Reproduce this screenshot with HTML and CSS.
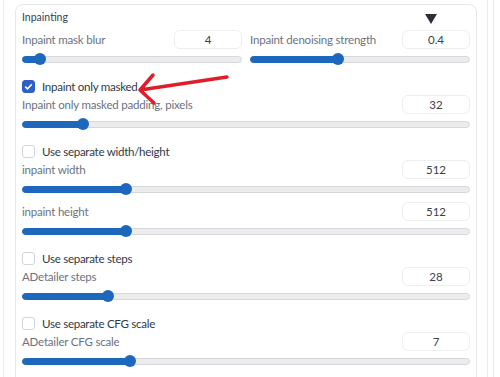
FILE: index.html
```html
<!doctype html>
<html lang="en">
<head>
  <meta charset="utf-8">
  <title>Inpainting</title>
  <link rel="stylesheet" href="styles.css">
</head>
<body>
<div class="page">
  <div class="frame">
    <div class="panel">
      <div class="panel-head">
        <span class="panel-title">Inpainting</span>
        <span class="caret"></span>
      </div>

      <div class="cols">
        <div class="field">
          <div class="field-head"><span class="label">Inpaint mask blur</span><span class="num">4</span></div>
          <div class="slider"><div class="track"><div class="fill" style="width:8%"></div><div class="thumb" style="left:8%"></div></div></div>
        </div>
        <div class="field">
          <div class="field-head"><span class="label">Inpaint denoising strength</span><span class="num">0.4</span></div>
          <div class="slider"><div class="track"><div class="fill" style="width:40%"></div><div class="thumb" style="left:40%"></div></div></div>
        </div>
      </div>

      <label class="check"><span class="box on"></span>Inpaint only masked</label>
      <div class="field">
        <div class="field-head"><span class="label">Inpaint only masked padding, pixels</span><span class="num">32</span></div>
        <div class="slider"><div class="track"><div class="fill" style="width:13.4%"></div><div class="thumb" style="left:13.4%"></div></div></div>
      </div>

      <label class="check"><span class="box"></span>Use separate width/height</label>
      <div class="field">
        <div class="field-head"><span class="label">inpaint width</span><span class="num">512</span></div>
        <div class="slider"><div class="track"><div class="fill" style="width:23%"></div><div class="thumb" style="left:23%"></div></div></div>
      </div>
      <div class="field">
        <div class="field-head"><span class="label">inpaint height</span><span class="num">512</span></div>
        <div class="slider"><div class="track"><div class="fill" style="width:23%"></div><div class="thumb" style="left:23%"></div></div></div>
      </div>

      <label class="check"><span class="box"></span>Use separate steps</label>
      <div class="field">
        <div class="field-head"><span class="label">ADetailer steps</span><span class="num">28</span></div>
        <div class="slider"><div class="track"><div class="fill" style="width:19%"></div><div class="thumb" style="left:19%"></div></div></div>
      </div>

      <label class="check"><span class="box"></span>Use separate CFG scale</label>
      <div class="field">
        <div class="field-head"><span class="label">ADetailer CFG scale</span><span class="num">7</span></div>
        <div class="slider"><div class="track"><div class="fill" style="width:24%"></div><div class="thumb" style="left:24%"></div></div></div>
      </div>

      <!-- red annotation arrow -->
      <svg class="arrow" width="105" height="44" viewBox="0 0 105 44">
        <path d="M97 15 L10 28 M23 13 L10 28 L24 41" fill="none" stroke="#e11d2a" stroke-width="3.5" stroke-linecap="round" stroke-linejoin="round"/>
      </svg>
    </div>
  </div>
  <div class="side"></div>
</div>
</body>
</html>
```

FILE: styles.css
```css
body {
  margin: 0;
  background: #fff;
  font-family: "Lato", "Noto Sans", sans-serif;
  color: #374151;
}

.page {
  display: flex;
  height: 377px;
  overflow: hidden;
}

.frame {
  margin-left: 3px;
  padding: 4px 10px 0 11px;
  border-left: 1px solid #ececec;
}

/* main block */
.panel {
  position: relative;
  display: flex;
  flex-direction: column;
  width: 448px;
  height: 400px;
  padding: 3px 6px 0 6px;
  border: 1px solid #e5e7eb;
  border-radius: 8px;
}

.panel-head {
  display: flex;
  align-items: center;
  justify-content: space-between;
  height: 18px;
  margin-bottom: 4px;
}
.panel-title {
  font-size: 10.5px;
  color: #374151;
}
.caret {
  width: 0;
  height: 0;
  margin-right: 33px;
  margin-top: 4px;
  border-left: 6px solid transparent;
  border-right: 6px solid transparent;
  border-top: 10px solid #2b2f38;
}

.cols {
  display: grid;
  grid-template-columns: 1fr 1fr;
  gap: 8px;
}

.field {
  margin-bottom: 3px;
}
.field-head {
  display: flex;
  align-items: center;
  justify-content: space-between;
  height: 19px;
}
.label {
  font-size: 11.5px;
  letter-spacing: -0.2px;
  color: #6b7280;
}
.num {
  box-sizing: border-box;
  width: 68px;
  height: 19px;
  line-height: 17px;
  text-align: center;
  font-size: 11.5px;
  color: #374151;
  border: 1px solid #eceef1;
  border-radius: 6px;
  background: #fff;
}

/* slider */
.slider {
  display: flex;
  align-items: center;
  height: 20px;
}
.track {
  position: relative;
  flex: 1;
  height: 5px;
  border: 1px solid #d6d8dc;
  border-radius: 4px;
  background: #ececec;
}
.fill {
  height: 100%;
  margin: -1px 0 0 -1px;
  border: 1px solid #1d67bd;
  border-radius: 4px;
  background: #1d67bd;
}
.thumb {
  position: absolute;
  top: 50%;
  width: 12px;
  height: 12px;
  margin: -6px 0 0 -6px;
  border-radius: 50%;
  background: #1d67bd;
}

/* checkboxes */
.check {
  display: flex;
  align-items: center;
  height: 16px;
  margin: 6px 0 1px;
  font-size: 11.6px;
  letter-spacing: -0.3px;
  color: #333a45;
}
.box {
  box-sizing: border-box;
  width: 13px;
  height: 13px;
  margin-right: 7px;
  border: 1px solid #d1d5db;
  border-radius: 3px;
  background: #fff;
}
.box.on {
  border-color: #2f5fc6;
  background: #2f5fc6 url("data:image/svg+xml;utf8,<svg xmlns='http://www.w3.org/2000/svg' viewBox='0 0 13 13'><path d='M3.2 6.6 L5.5 8.8 L9.8 4.2' fill='none' stroke='white' stroke-width='1.6'/></svg>") center/13px no-repeat;
}

.arrow {
  position: absolute;
  left: 114px;
  top: 57px;
}

.side {
  width: 5px;
  border-left: 1px solid #ececec;
  border-right: 1px solid #ececec;
}
```
